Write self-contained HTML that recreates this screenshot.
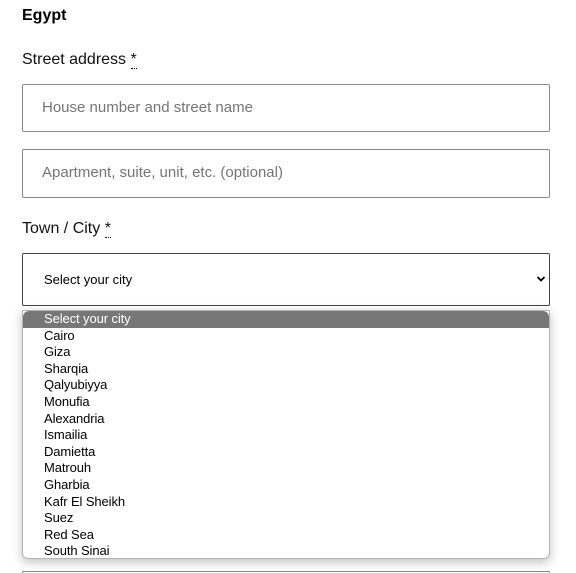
<!DOCTYPE html>
<html><head><style>
html,body{margin:0;width:576px;height:573px;overflow:hidden}
body{background:#fff;font-family:"Liberation Sans",Arial,sans-serif;position:relative}
.a{position:absolute}
.lbl{font-size:16px;color:#111;}
.in{position:absolute;left:22px;width:528px;border:1px solid #8a8a8a;border-radius:2px;box-sizing:border-box;}
.ph{position:absolute;left:19px;font-size:15px;color:#757575}
.dd{position:absolute;left:22px;top:310px;width:528px;height:249px;background:#fff;border-radius:0 0 6px 6px;box-shadow:0 3px 10px rgba(0,0,0,.25);border:1px solid #b5b5b5;box-sizing:border-box;overflow:hidden}
.o{height:16.6px;line-height:16px;font-size:13px;padding-left:21px;color:#000;letter-spacing:-0.1px}
.sel{background:#777;color:#fff;border-radius:6px 6px 0 0}
</style></head><body>
<div class="a" style="left:22px;top:7px;font-size:16px;font-weight:bold">Egypt</div>
<div class="a lbl" style="left:22px;top:51px">Street address <span style="border-bottom:1px dotted #111">*</span></div>
<div class="in" style="top:84px;height:48px"><span class="ph" style="top:14px">House number and street name</span></div>
<div class="in" style="top:149px;height:49px"><span class="ph" style="top:14px">Apartment, suite, unit, etc. (optional)</span></div>
<div class="a lbl" style="left:22px;top:220px">Town / City <span style="border-bottom:1px dotted #111">*</span></div>
<div class="in" style="top:253px;height:53px;border-color:#444"><span class="a" style="left:21px;top:18px;font-size:13px;color:#000">Select your city</span>
<svg class="a" style="right:3px;top:21px" width="10" height="8" viewBox="0 0 10 8"><path d="M1.5 2l3.5 3.5L8.5 2" stroke="#000" stroke-width="1.8" fill="none"/></svg></div>
<div class="in" style="top:360px;height:56px;border-color:#555"></div>
<div class="in" style="top:467px;height:49px;border-color:#555"></div>
<div class="in" style="top:571px;height:20px;border-color:#888"></div>
<div class="dd">
<div class="o sel">Select your city</div>
<div class="o">Cairo</div><div class="o">Giza</div><div class="o">Sharqia</div><div class="o">Qalyubiyya</div><div class="o">Monufia</div><div class="o">Alexandria</div><div class="o">Ismailia</div><div class="o">Damietta</div><div class="o">Matrouh</div><div class="o">Gharbia</div><div class="o">Kafr El Sheikh</div><div class="o">Suez</div><div class="o">Red Sea</div><div class="o">South Sinai</div>
</div>
</body></html>
